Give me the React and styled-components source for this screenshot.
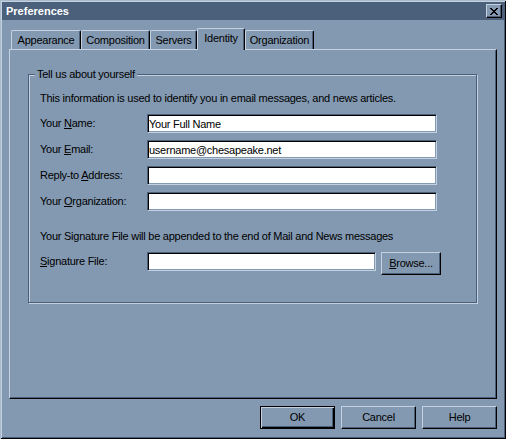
import React from 'react';
import styled, { createGlobalStyle, css } from 'styled-components';

const FACE = '#8399b1';
const LIGHT = '#c3d1e0';
const DARK = '#4b6078';
const TITLE = '#4a607b';

const GlobalStyle = createGlobalStyle`
  body {
    margin: 0;
    font-family: "Liberation Sans", Arial, sans-serif;
    font-size: 11px;
    letter-spacing: -0.25px;
    color: #000;
  }
`;

const Window = styled.div`
  width: 506px;
  height: 439px;
  box-sizing: border-box;
  padding: 2px;
  display: flex;
  flex-direction: column;
  background: ${FACE};
  box-shadow: inset 1px 1px 0 #a9bbcd, inset -1px -1px 0 #000,
    inset 2px 2px 0 ${LIGHT}, inset -2px -2px 0 ${DARK};
`;

const TitleBar = styled.div`
  height: 18px;
  display: flex;
  align-items: center;
  justify-content: space-between;
  padding: 0 2px 0 4px;
  background: ${TITLE};
  color: #fff;
  font-weight: bold;
  letter-spacing: 0;
`;

const CloseButton = styled.button`
  width: 16px;
  height: 14px;
  box-sizing: border-box;
  padding: 0;
  display: flex;
  align-items: center;
  justify-content: center;
  background: ${FACE};
  border: 1px solid;
  border-color: ${LIGHT} #000 #000 ${LIGHT};
  box-shadow: inset -1px -1px 0 ${DARK};
`;

const Body = styled.div`
  flex: 1;
  display: flex;
  flex-direction: column;
  padding: 8px 7px 8px 7px;
`;

const TabStrip = styled.div`
  height: 21px;
  display: flex;
  align-items: flex-end;
  padding-left: 2px;
`;

const Tab = styled.div`
  width: ${(p) => p.$w}px;
  height: 19px;
  box-sizing: border-box;
  display: flex;
  align-items: center;
  justify-content: center;
  padding-bottom: 1px;
  background: ${FACE};
  border-top: 1px solid ${LIGHT};
  border-left: 1px solid ${LIGHT};
  border-right: 1px solid #000;
  border-radius: 2px 2px 0 0;
  box-shadow: inset -1px 0 0 ${DARK};
  ${(p) =>
    p.$active &&
    css`
      height: 22px;
      margin-bottom: -1px;
      padding-bottom: 4px;
      position: relative;
      z-index: 1;
    `}
`;

const Panel = styled.div`
  height: 350px;
  box-sizing: border-box;
  padding: 18px 19px 0 18px;
  border-top: 1px solid ${LIGHT};
  border-left: 1px solid ${LIGHT};
  border-right: 1px solid #000;
  border-bottom: 1px solid #000;
  box-shadow: inset -1px -1px 0 ${DARK};
`;

const Group = styled.fieldset`
  margin: 0;
  min-width: 0;
  padding: 11px 11px 27px 11px;
  border: 1px solid ${DARK};
  box-shadow: inset 1px 1px 0 ${LIGHT}, 1px 1px 0 ${LIGHT};
`;

const Legend = styled.legend`
  margin-left: -5px;
  padding: 0 2px;
  line-height: 13px;
  background: ${FACE};
`;

const Note = styled.div`
  line-height: 13px;
  margin-top: ${(p) => p.$top || 0}px;
  margin-bottom: 9px;
`;

const Fields = styled.div`
  display: flex;
  flex-direction: column;
  gap: 7px;
`;

const Row = styled.div`
  display: flex;
  align-items: ${(p) => (p.$top ? 'flex-start' : 'center')};
`;

const Label = styled.label`
  width: 107px;
  flex-shrink: 0;
  line-height: 13px;
  margin-top: ${(p) => (p.$top ? 3 : 0)}px;
`;

const TextBox = styled.input`
  width: ${(p) => p.$w}px;
  height: 19px;
  box-sizing: border-box;
  margin: 0;
  padding: 0 1px;
  font: inherit;
  letter-spacing: inherit;
  color: #000;
  background: #fff;
  border: 1px solid;
  border-color: ${DARK} ${LIGHT} ${LIGHT} ${DARK};
  box-shadow: inset 1px 1px 0 #000, inset -1px -1px 0 ${FACE};
  outline: none;
`;

const Button = styled.button`
  width: ${(p) => p.$w || 75}px;
  height: 23px;
  box-sizing: border-box;
  margin: 0 0 0 ${(p) => p.$gap || 0}px;
  padding: 0 0 1px;
  font: inherit;
  letter-spacing: inherit;
  color: #000;
  background: ${FACE};
  border: 1px solid;
  border-color: ${LIGHT} #000 #000 ${LIGHT};
  box-shadow: inset -1px -1px 0 ${DARK};
  ${(p) =>
    p.$default &&
    css`
      border-color: #000;
      box-shadow: inset 1px 1px 0 ${LIGHT}, inset -1px -1px 0 #000,
        inset -2px -2px 0 ${DARK};
    `}
`;

const ButtonBar = styled.div`
  display: flex;
  justify-content: flex-end;
  gap: 6px;
  margin-top: 7px;
`;

const tabs = [
  ['Appearance', 70],
  ['Composition', 69],
  ['Servers', 47],
  ['Identity', 48],
  ['Organization', 69],
];

const fields = [
  ['Your ', 'N', 'ame:', 'Your Full Name'],
  ['Your ', 'E', 'mail:', 'username@chesapeake.net'],
  ['Reply-to ', 'A', 'ddress:', ''],
  ['Your ', 'O', 'rganization:', ''],
];

export default function App() {
  return (
    <>
      <GlobalStyle />
      <Window>
        <TitleBar>
          <span>Preferences</span>
          <CloseButton aria-label="Close">
            <svg width="8" height="7" viewBox="0 0 8 7" shapeRendering="crispEdges">
              <path
                d="M0 0h2v1h-2zM6 0h2v1h-2zM1 1h2v1h-2zM5 1h2v1h-2zM2 2h4v1h-4zM3 3h2v1h-2zM2 4h4v1h-4zM1 5h2v1h-2zM5 5h2v1h-2zM0 6h2v1h-2zM6 6h2v1h-2z"
                fill="#000"
              />
            </svg>
          </CloseButton>
        </TitleBar>
        <Body>
          <TabStrip>
            {tabs.map(([name, w]) => (
              <Tab key={name} $w={w} $active={name === 'Identity'}>
                {name}
              </Tab>
            ))}
          </TabStrip>
          <Panel>
            <Group>
              <Legend>Tell us about yourself</Legend>
              <Note>This information is used to identify you in email messages, and news articles.</Note>
              <Fields>
                {fields.map(([pre, key, post, value]) => (
                  <Row key={key}>
                    <Label>
                      {pre}
                      <u>{key}</u>
                      {post}
                    </Label>
                    <TextBox $w={290} defaultValue={value} readOnly />
                  </Row>
                ))}
              </Fields>
              <Note $top={19}>Your Signature File will be appended to the end of Mail and News messages</Note>
              <Row $top>
                <Label $top>
                  <u>S</u>ignature File:
                </Label>
                <TextBox $w={229} readOnly />
                <Button $w={60} $gap={5}>
                  <u>B</u>rowse...
                </Button>
              </Row>
            </Group>
          </Panel>
          <ButtonBar>
            <Button $default>OK</Button>
            <Button>Cancel</Button>
            <Button>Help</Button>
          </ButtonBar>
        </Body>
      </Window>
    </>
  );
}
